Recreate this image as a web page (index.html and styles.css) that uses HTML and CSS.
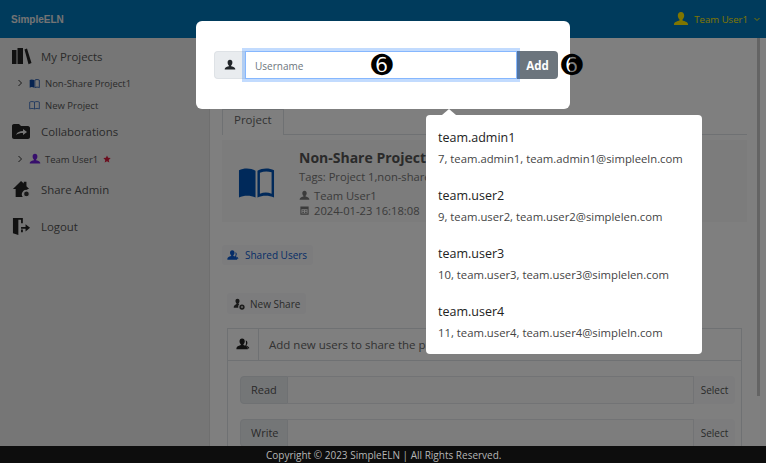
FILE: index.html
```html
<!DOCTYPE html>
<html>
<head>
<meta charset="utf-8">
<title>SimpleELN</title>
<link rel="stylesheet" href="styles.css">
</head>

<body>
<div class="app">

<header class="topbar">
	<span class="brand">SimpleELN</span>
	<span class="account">
		<svg class="ico-account" viewBox="0 0 16 16"><path d="M8 1c2 0 3.200 1.500 3.200 3.600 0 1.700-.8 3.200-1.700 3.900v1.100c1.700.6 5 1.300 5.500 3.400v1H1v-1c.5-2.100 3.800-2.800 5.500-3.400V8.500C5.600 7.800 4.800 6.300 4.800 4.600 4.800 2.500 6 1 8 1z"/></svg>
		Team User1
		<svg class="ico-caret" viewBox="0 0 8 8"><path d="M1.500 3l2.500 2.500L6.500 3"/></svg>
	</span>
</header>

<div class="middle">
	<nav class="sidebar">
		<div class="nav-main">
			<svg class="nav-ico" viewBox="0 0 21 18"><path d="M1 3h4.500v14H1zM6.500 1H12v16H6.500zM13.500 2.500l2.500-1L20.500 16l-3 1.200z"/></svg>
			My Projects
		</div>
		<div class="nav-sub">
			<svg class="chev" viewBox="0 0 8 8"><path d="M2.500 1l3 3-3 3"/></svg>
			<svg class="sub-ico book" viewBox="0 0 16 14"><path d="M1 2c2-1 4-1 6.500 0v11C5 12 3 12 1 13z"/><path class="hollow" d="M8.500 2c2-1 4.500-1 6.500 0v11c-2-1-4.500-1-6.500 0z"/></svg>
			Non-Share Project1
		</div>
		<div class="nav-sub">
			<span class="chev"></span>
			<svg class="sub-ico book-open" viewBox="0 0 16 14"><path d="M1 2c2-1 4.500-1 7 0 2.500-1 5-1 7 0v10c-2-1-4.500-1-7 0-2.500-1-5-1-7 0zM8 2v10"/></svg>
			New Project
		</div>
		<div class="nav-main">
			<svg class="nav-ico" viewBox="0 0 21 18"><path d="M1 4c0-1 .5-2 2-2h5l2 2h7c1 0 2 1 2 2v9c0 1-1 2-2 2H3c-1 0-2-1-2-2z"/><path class="arrow-in" d="M5 13c1-3 4-4 7-4V7l4 3-4 3v-2c-3 0-5 .5-7 2z"/></svg>
			Collaborations
		</div>
		<div class="nav-sub gap-team">
			<svg class="chev" viewBox="0 0 8 8"><path d="M2.500 1l3 3-3 3"/></svg>
			<svg class="sub-ico user-purple" viewBox="0 0 16 16"><path d="M8 1c2 0 3.200 1.500 3.200 3.600 0 1.700-.8 3.200-1.700 3.900v1.100c1.700.6 5 1.300 5.500 3.400v1H1v-1c.5-2.100 3.800-2.800 5.500-3.400V8.500C5.600 7.800 4.800 6.300 4.800 4.600 4.800 2.500 6 1 8 1z"/></svg>
			Team User1
			<svg class="star" viewBox="0 0 10 10"><path d="M5 .5l1.400 3 3.200.4-2.400 2.200.7 3.300L5 7.700 2.100 9.400l.7-3.300L.4 3.900l3.200-.4z"/></svg>
		</div>
		<div class="nav-main gap-admin">
			<svg class="nav-ico" viewBox="0 0 21 20"><path d="M1 10l9-9 3 3V2h3v5l3 3h-2v1a5 5 0 0 0-5 8H4v-9z"/><circle class="gear" cx="16" cy="15.500" r="3.200"/></svg>
			Share Admin
		</div>
		<div class="nav-main gap-logout">
			<svg class="nav-ico" viewBox="0 0 21 20"><path d="M1 1h11v6h-2V3H7v17l-6-2z"/><path d="M10 11h5V8l5 4-5 4v-3h-5z"/><path d="M10 14h2v3h-2z"/></svg>
			Logout
		</div>
	</nav>

	<main class="content">
		<div class="tabs">
			<span class="tab">Project</span>
		</div>

		<section class="project-info">
			<svg class="book-big" viewBox="0 0 38 32"><path d="M1 3c5-2.500 12-2.500 17 .5V31c-5-2.500-12-2.500-17 0z"/><path d="M20 3.500c5-3 12-3 17-.5v28c-5-2.500-12-2.500-17 0zM22.500 5.500v21.500c4-1.500 8-1.500 12 0V5c-4-1-8-1-12 .5z" fill-rule="evenodd"/></svg>
			<div class="project-text">
				<h2>Non-Share Project1</h2>
				<div>Tags: Project 1,non-share</div>
				<div class="meta meta-first">
					<svg class="ico-small" viewBox="0 0 16 16"><path d="M8 1c2 0 3.200 1.500 3.200 3.600 0 1.700-.8 3.200-1.700 3.900v1.100c1.700.6 5 1.300 5.500 3.400v1H1v-1c.5-2.100 3.800-2.800 5.500-3.400V8.500C5.600 7.800 4.800 6.300 4.800 4.600 4.800 2.500 6 1 8 1z"/></svg>
					Team User1
				</div>
				<div class="meta">
					<svg class="ico-small" viewBox="0 0 16 16"><path d="M2 2h12v12H2zM3.500 6v6.500h9V6zM5 7.500h2v1.500H5zM9 7.500h2v1.500H9zM5 10h2v1.500H5zM9 10h2v1.500H9z" fill-rule="evenodd"/></svg>
					2024-01-23 16:18:08
				</div>
			</div>
		</section>

		<div class="pill-row">
			<span class="pill">
				<svg class="ico-users" viewBox="0 0 16 14"><path d="M7 0c2 0 3 1.300 3 3.200 0 1.500-.7 2.800-1.500 3.400v1C10 8.100 13 8.800 13.500 11v1.500H.5V11C1 8.800 4 8.100 5.500 7.600v-1C4.700 6 4 4.700 4 3.200 4 1.300 5 0 7 0z"/><path d="M11 2.500c1.500.3 2 1.300 2 2.700 0 1-.5 2-1 2.500v.6c1 .3 2.500.9 3 2.200v1h-1c-.5-1.500-2-2.400-3.500-3 .6-1 1-2 1-3.200 0-1-.2-2-.5-2.800z"/></svg>
				Shared Users
			</span>
		</div>

		<div class="btn-row">
			<span class="btn-share">
				<svg class="ico-share" viewBox="0 0 16 16"><path d="M6 1c1.700 0 2.700 1.200 2.700 3 0 1.300-.6 2.500-1.300 3v1l1 .4A4.500 4.500 0 0 0 7 13H1v-1.500C1.500 9.700 3.500 9 4.600 8V7C3.900 6.500 3.300 5.300 3.300 4 3.300 2.200 4.300 1 6 1z"/><circle cx="12" cy="12" r="3.500"/><path class="plus" d="M10.500 12h3M12 10.500v3"/></svg>
				New Share
			</span>
		</div>

		<section class="card">
			<div class="card-head">
				<span class="card-ico">
					<svg class="ico-users-dark" viewBox="0 0 16 14"><path d="M7 0c2 0 3 1.300 3 3.200 0 1.500-.7 2.800-1.500 3.400v1C10 8.100 13 8.800 13.500 11v1.500H.5V11C1 8.800 4 8.100 5.500 7.600v-1C4.700 6 4 4.700 4 3.200 4 1.300 5 0 7 0z"/><path d="M11 2.500c1.500.3 2 1.300 2 2.700 0 1-.5 2-1 2.500v.6c1 .3 2.500.9 3 2.200v1h-1c-.5-1.500-2-2.400-3.500-3 .6-1 1-2 1-3.200 0-1-.2-2-.5-2.800z"/></svg>
				</span>
				<span class="card-title">Add new users to share the project</span>
			</div>
			<div class="card-body">
				<div class="field">
					<span class="field-label">Read</span>
					<span class="field-input"></span>
					<span class="field-select">Select</span>
				</div>
				<div class="field">
					<span class="field-label">Write</span>
					<span class="field-input"></span>
					<span class="field-select">Select</span>
				</div>
			</div>
		</section>
	</main>
	<div class="scrollbar"></div>
</div>

<footer class="footer">Copyright &copy; 2023 SimpleELN | All Rights Reserved.</footer>

<!-- dialog on top of the page -->
<div class="backdrop"></div>

<div class="modal">
	<div class="input-group">
		<span class="addon">
			<svg class="ico-addon" viewBox="0 0 16 16"><path d="M8 1c2 0 3.200 1.500 3.200 3.600 0 1.700-.8 3.200-1.700 3.900v1.100c1.700.6 5 1.300 5.500 3.400v1H1v-1c.5-2.100 3.800-2.800 5.500-3.400V8.500C5.600 7.800 4.800 6.300 4.800 4.600 4.800 2.500 6 1 8 1z"/></svg>
		</span>
		<input class="username" type="text" placeholder="Username">
		<button class="add">Add</button>
	</div>
</div>
<span class="mark mark-input">&#x278F;</span>
<span class="mark mark-add">&#x278F;</span>

<div class="popover">
	<div class="person">
		<div class="person-name">team.admin1</div>
		<div class="person-info">7, team.admin1, team.admin1@simpleeln.com</div>
	</div>
	<div class="person">
		<div class="person-name">team.user2</div>
		<div class="person-info">9, team.user2, team.user2@simplelen.com</div>
	</div>
	<div class="person">
		<div class="person-name">team.user3</div>
		<div class="person-info">10, team.user3, team.user3@simplelen.com</div>
	</div>
	<div class="person">
		<div class="person-name">team.user4</div>
		<div class="person-info">11, team.user4, team.user4@simpleln.com</div>
	</div>
</div>

</div>
</body>
</html>
```

FILE: styles.css
```css
* { box-sizing: border-box; }
html, body { margin: 0; padding: 0; height: 100%; overflow: hidden; }
body {
	font-family: "Open Sans", "Noto Sans", sans-serif;
	font-size: 11px;
	color: #212529;
	background: #fff;
}
svg { display: block; flex: none; fill: currentColor; }

.app {
	position: relative;
	display: flex;
	flex-direction: column;
	height: 463px;
	overflow: hidden;
}

/* top bar */
.topbar {
	flex: none;
	height: 38px;
	display: flex;
	align-items: center;
	justify-content: space-between;
	padding: 0 5px 0 11px;
	background: #0076b8;
	color: #fff;
}
.brand { font: 700 10px "Liberation Sans", sans-serif; color: #e8e8e8; }
.account {
	display: flex;
	align-items: center;
	gap: 5px;
	color: #ffeb00;
	font-size: 9.600px;
}
.ico-account { width: 16px; height: 16px; }
.ico-caret { width: 8px; height: 8px; fill: none; stroke: currentColor; stroke-width: 1; }

/* middle part */
.middle { flex: 1; display: flex; min-height: 0; position: relative; overflow: hidden; }
.sidebar {
	flex: none;
	width: 210px;
	padding-top: 3px;
	background: #ededed;
	border-right: 1px solid #dedede;
}
.nav-main {
	display: flex;
	align-items: center;
	gap: 9px;
	height: 30px;
	padding-left: 11px;
	font-size: 11.400px;
	color: #555;
}
.nav-ico { width: 21px; height: 18px; color: #222; }
.gear { fill: #333; stroke: #ededed; stroke-width: 1.200; }
.arrow-in { fill: #ededed; }
.nav-sub {
	display: flex;
	align-items: center;
	height: 22px;
	padding-left: 16px;
	font-size: 9.500px;
	color: #555;
}
.nav-main + .nav-sub { margin-top: 1px; }
.chev { width: 8px; height: 8px; margin-right: 5px; fill: none; stroke: #333; stroke-width: 1; }
.sub-ico { width: 11px; height: 11px; margin-right: 5px; }
.book { color: #0d47a1; fill: #0d47a1; }
.book .hollow { fill: none; stroke: #0d47a1; stroke-width: 1.200; }
.book-open { fill: none; stroke: #2d64b8; stroke-width: 1.200; }
.user-purple { color: #6f1fd8; width: 12px; height: 12px; margin-right: 4px; }
.star { width: 8px; height: 8px; margin-left: 5px; color: #d81b3c; }
.nav-main + .gap-team { margin-top: 2px; }
.gap-admin { margin-top: 4px; }
.gap-logout { margin-top: 7px; }

.content { flex: 1; min-width: 0; padding: 71px 0 0 12px; overflow: hidden; }
.scrollbar {
	position: absolute;
	right: 6px;
	top: 0;
	width: 3px;
	height: 358px;
	background: #c8c8c8;
}

.tabs {
	width: 525px;
	height: 26px;
	border-bottom: 1px solid #dee2e6;
}
.tab {
	display: block;
	width: 62px;
	height: 26px;
	padding: 0 0 0 11px;
	font-size: 11.500px;
	line-height: 20px;
	color: #666;
	background: #fff;
	border: 1px solid #dee2e6;
	border-bottom: 0;
}
.project-info {
	display: flex;
	width: 525px;
	height: 82px;
	margin-top: 5px;
	padding: 7px 0 0 16px;
	background: #f8f8f8;
	color: #777;
	line-height: 15px;
	font-size: 11.200px;
}
.book-big { width: 37px; height: 32px; margin: 20px 24px 0 0; color: #0052b4; }
.project-text h2 { margin: 2px 0 2px; font-size: 14px; line-height: 18px; font-weight: 700; color: #555; }
.project-text div { white-space: nowrap; }
.meta { display: flex; align-items: center; gap: 4px; }
.meta-first { margin-top: 4px; }
.ico-small { width: 11px; height: 11px; color: #777; }

.pill-row { margin-top: 23px; height: 20px; }
.pill {
	display: inline-flex;
	align-items: center;
	gap: 6px;
	height: 20px;
	padding: 0 6px 0 5px;
	background: #f8f9fa;
	color: #0d5bd0;
	font-size: 10px;
	border-radius: 3px;
}
.ico-users { width: 12px; height: 11px; }
.btn-row { margin-top: 28px; padding-left: 5px; height: 21px; }
.btn-share {
	display: inline-flex;
	align-items: center;
	gap: 5px;
	height: 21px;
	padding: 0 6px;
	background: #f8f9fa;
	color: #555;
	font-size: 10px;
	border-radius: 3px;
}
.ico-share { width: 12px; height: 12px; color: #333; }
.plus { fill: none; stroke: #f8f9fa; stroke-width: 1; }

.card {
	width: 515px;
	margin: 14px 0 0 5px;
	border: 1px solid #dee2e6;
	border-bottom: 0;
}
.card-head {
	display: flex;
	align-items: center;
	height: 32px;
	border-bottom: 1px solid #dee2e6;
}
.card-ico {
	display: flex;
	align-items: center;
	justify-content: center;
	width: 31px;
	height: 31px;
	border-right: 1px solid #dee2e6;
}
.ico-users-dark { width: 14px; height: 13px; color: #222; }
.card-title { padding-left: 10px; font-size: 11.500px; color: #666; white-space: nowrap; }
.card-body { padding: 15px 6px 0 12px; }
.field {
	display: flex;
	height: 28px;
	margin-bottom: 15px;
	background: #f8f9fa;
	border-radius: 4px;
}
.field-label {
	width: 48px;
	padding-left: 10px;
	line-height: 26px;
	background: #e9ecef;
	border: 1px solid #dee2e6;
	border-radius: 4px 0 0 4px;
	font-size: 11px;
	color: #555;
}
.field-input {
	flex: 1;
	background: #fafafa;
	border: 1px solid #e4e7ea;
	border-left: 0;
}
.field-select {
	width: 41px;
	text-align: center;
	line-height: 28px;
	font-size: 10px;
	color: #555;
}

.footer {
	position: relative;
	z-index: 2;
	flex: none;
	height: 17px;
	margin-top: auto;
	padding-left: 266px;
	background: #0d0d0d;
	color: #b6b6b6;
	font-size: 10px;
	line-height: 19px;
	white-space: nowrap;
}

/* dialog, over everything */
.backdrop {
	position: absolute;
	top: 0; right: 0; bottom: 0; left: 0;
	z-index: 1;
	background: rgba(0, 0, 0, .5);
}
.modal {
	position: absolute;
	z-index: 3;
	left: 196px;
	top: 21px;
	width: 374px;
	height: 88px;
	padding: 30px 12px 0 18px;
	background: #fff;
	border-radius: 6px;
}
.input-group { display: flex; height: 28px; }
.addon {
	display: flex;
	align-items: center;
	justify-content: center;
	width: 31px;
	background: #e9ecef;
	border: 1px solid #dee2e6;
	border-right: 0;
	border-radius: 4px 0 0 4px;
}
.ico-addon { width: 12px; height: 12px; color: #212529; }
.username {
	flex: 1;
	min-width: 0;
	height: 28px;
	padding: 2px 9px 0;
	border: 1px solid #86b7fe;
	outline: 0;
	box-shadow: 0 0 0 3px rgba(13, 110, 253, .25);
	font: 10px "Open Sans", sans-serif;
	position: relative;
}
.username::placeholder { color: #6c757d; }
.add {
	width: 41px;
	height: 28px;
	padding: 0;
	border: 0;
	border-radius: 0 4px 4px 0;
	background: #6c757d;
	color: #fff;
	font: 700 11.500px "Open Sans", sans-serif;
}
.mark {
	position: absolute;
	z-index: 4;
	font-family: "DejaVu Sans", sans-serif;
	font-size: 26px;
	line-height: 26px;
	color: #000;
}
.mark-input { left: 371px; top: 52px; }
.mark-add { left: 561px; top: 52px; }

.popover {
	position: absolute;
	z-index: 3;
	left: 426px;
	top: 115px;
	width: 276px;
	height: 239px;
	padding: 13px 12px 0;
	background: #fff;
	border-radius: 4px;
}
.popover:before {
	content: "";
	position: absolute;
	left: 16px;
	top: -6px;
	border: 7px solid transparent;
	border-top: 0;
	border-bottom: 6px solid #fff;
}
.person { height: 58px; }
.person-name { font-size: 12.500px; line-height: 20px; color: #222; }
.person-info { margin-top: 2px; font-size: 11.300px; line-height: 17px; color: #444; white-space: nowrap; }
```
